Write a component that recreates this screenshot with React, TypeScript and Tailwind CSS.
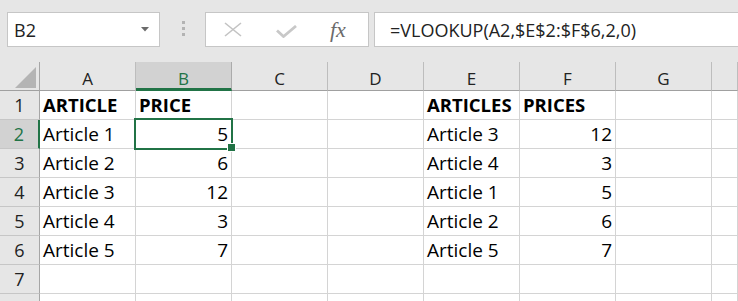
type Cell = { v: string; num?: boolean; bold?: boolean };

const COLS = ['A', 'B', 'C', 'D', 'E', 'F', 'G', ''];

const t = (v: string): Cell => ({ v });
const n = (v: string): Cell => ({ v, num: true });
const b = (v: string): Cell => ({ v, bold: true });
const e: Cell = { v: '' };

const ROWS: Cell[][] = [
  [b('ARTICLE'), b('PRICE'), e, e, b('ARTICLES'), b('PRICES'), e, e],
  [t('Article 1'), n('5'), e, e, t('Article 3'), n('12'), e, e],
  [t('Article 2'), n('6'), e, e, t('Article 4'), n('3'), e, e],
  [t('Article 3'), n('12'), e, e, t('Article 1'), n('5'), e, e],
  [t('Article 4'), n('3'), e, e, t('Article 2'), n('6'), e, e],
  [t('Article 5'), n('7'), e, e, t('Article 5'), n('7'), e, e],
  [e, e, e, e, e, e, e, e],
  [e, e, e, e, e, e, e, e],
];

const grid = 'grid grid-cols-[40px_repeat(7,96px)_1fr]';

function FormulaBar() {
  return (
    <div className="flex h-[62px] items-start bg-[#e6e6e6] pt-[12px] pl-[7px] font-['Open_Sans',sans-serif]">
      {/* name box */}
      <div className="flex h-[35px] w-[153px] items-center justify-between border border-[#c6c6c6] bg-white pl-[6px] pr-[10px]">
        <span className="text-[18px] leading-none text-[#222]">B2</span>
        <svg width="8" height="5" viewBox="0 0 8 5">
          <polygon points="0,0 8,0 4,4.5" fill="#6b6b6b" />
        </svg>
      </div>

      <div className="flex w-[45px] flex-col items-center gap-[3px] pt-[9px] pl-[1px]">
        <span className="h-[3px] w-[3px] bg-[#b3b3b3]" />
        <span className="h-[3px] w-[3px] bg-[#b3b3b3]" />
        <span className="h-[3px] w-[3px] bg-[#b3b3b3]" />
      </div>

      {/* cancel / enter / fx */}
      <div className="flex h-[35px] w-[164px] items-center border border-[#c6c6c6] bg-white pl-[18px]">
        <svg width="18" height="15" viewBox="0 0 18 15">
          <path d="M1 1 L17 14 M17 1 L1 14" stroke="#c3c3c3" strokeWidth="1.6" fill="none" />
        </svg>
        <svg width="21" height="13" viewBox="0 0 21 13" className="ml-[34px] mt-[3px]">
          <path d="M1 5.5 L7.5 11.5 L20 1" stroke="#c8c8c8" strokeWidth="2.8" fill="none" />
        </svg>
        <span className="ml-[33px] font-['Liberation_Serif',serif] text-[22px] italic leading-none text-[#6b6b6b]">
          fx
        </span>
      </div>

      {/* formula input */}
      <div className="ml-[5px] flex h-[35px] flex-1 items-center border border-r-0 border-[#c6c6c6] bg-white pl-[15px]">
        <span className="text-[18px] leading-none text-[#222]">=VLOOKUP(A2,$E$2:$F$6,2,0)</span>
      </div>
    </div>
  );
}

function Header() {
  return (
    <div className={`${grid} h-[29px] bg-[#e6e6e6] font-['Open_Sans',sans-serif]`}>
      <div className="flex items-end justify-end border-r border-b border-r-[#a6a6a6] border-b-[#a0a0a0] pr-[3px] pb-[2px]">
        <svg width="21" height="21" viewBox="0 0 21 21">
          <polygon points="21,0 21,21 0,21" fill="#b4b4b4" />
        </svg>
      </div>
      {COLS.map((c, i) =>
        c === 'B' ? (
          <div
            key={i}
            className="flex items-end justify-center border-r border-b-[3px] border-r-[#ababab] border-b-[#217346] bg-[#d2d2d2] pb-[1px] text-[17px] leading-none text-[#217346]"
          >
            {c}
          </div>
        ) : (
          <div
            key={i}
            className="flex items-end justify-center border-r border-b border-r-[#bdbdbd] border-b-[#a0a0a0] pb-[3px] text-[17px] leading-none text-[#222]"
          >
            {c}
          </div>
        ),
      )}
    </div>
  );
}

function Sheet() {
  return (
    <div className="font-['Open_Sans',sans-serif]">
      {ROWS.map((row, r) => {
        const sel = r === 1;
        // row 8 is only a sliver at the bottom edge; its number falls outside the window
        const label = r < 7 ? String(r + 1) : '';
        return (
          <div key={r} className={`${grid} h-[29px]`}>
            <div
              className={
                sel
                  ? 'border-r-2 border-b border-r-[#217346] border-b-[#c6c6c6] bg-[#d2d2d2] text-center text-[18px] leading-[28px] text-[#217346]'
                  : 'border-r border-b border-r-[#a6a6a6] border-b-[#c6c6c6] bg-[#e6e6e6] text-center text-[18px] leading-[28px] text-[#222]'
              }
            >
              {label}
            </div>
            {row.map((cell, c) => (
              <div
                key={c}
                className={`relative overflow-visible border-r border-b border-[#d4d4d4] px-[3px] leading-[28px] whitespace-nowrap text-black ${
                  cell.num ? 'text-right' : 'text-left'
                } ${cell.bold ? 'text-[18.5px] font-bold' : 'text-[19px]'}`}
              >
                {cell.v}
                {sel && c === 1 && (
                  <>
                    <div className="absolute -top-[2px] -left-[2px] z-10 h-[32px] w-[99px] border-2 border-[#217346]" />
                    <div className="absolute top-[23px] left-[91px] z-20 h-[9px] w-[9px] border border-white bg-[#217346]" />
                  </>
                )}
              </div>
            ))}
          </div>
        );
      })}
    </div>
  );
}

export default function App() {
  return (
    <div className="h-[301px] w-[738px] overflow-hidden bg-white">
      <FormulaBar />
      <Header />
      <Sheet />
    </div>
  );
}
